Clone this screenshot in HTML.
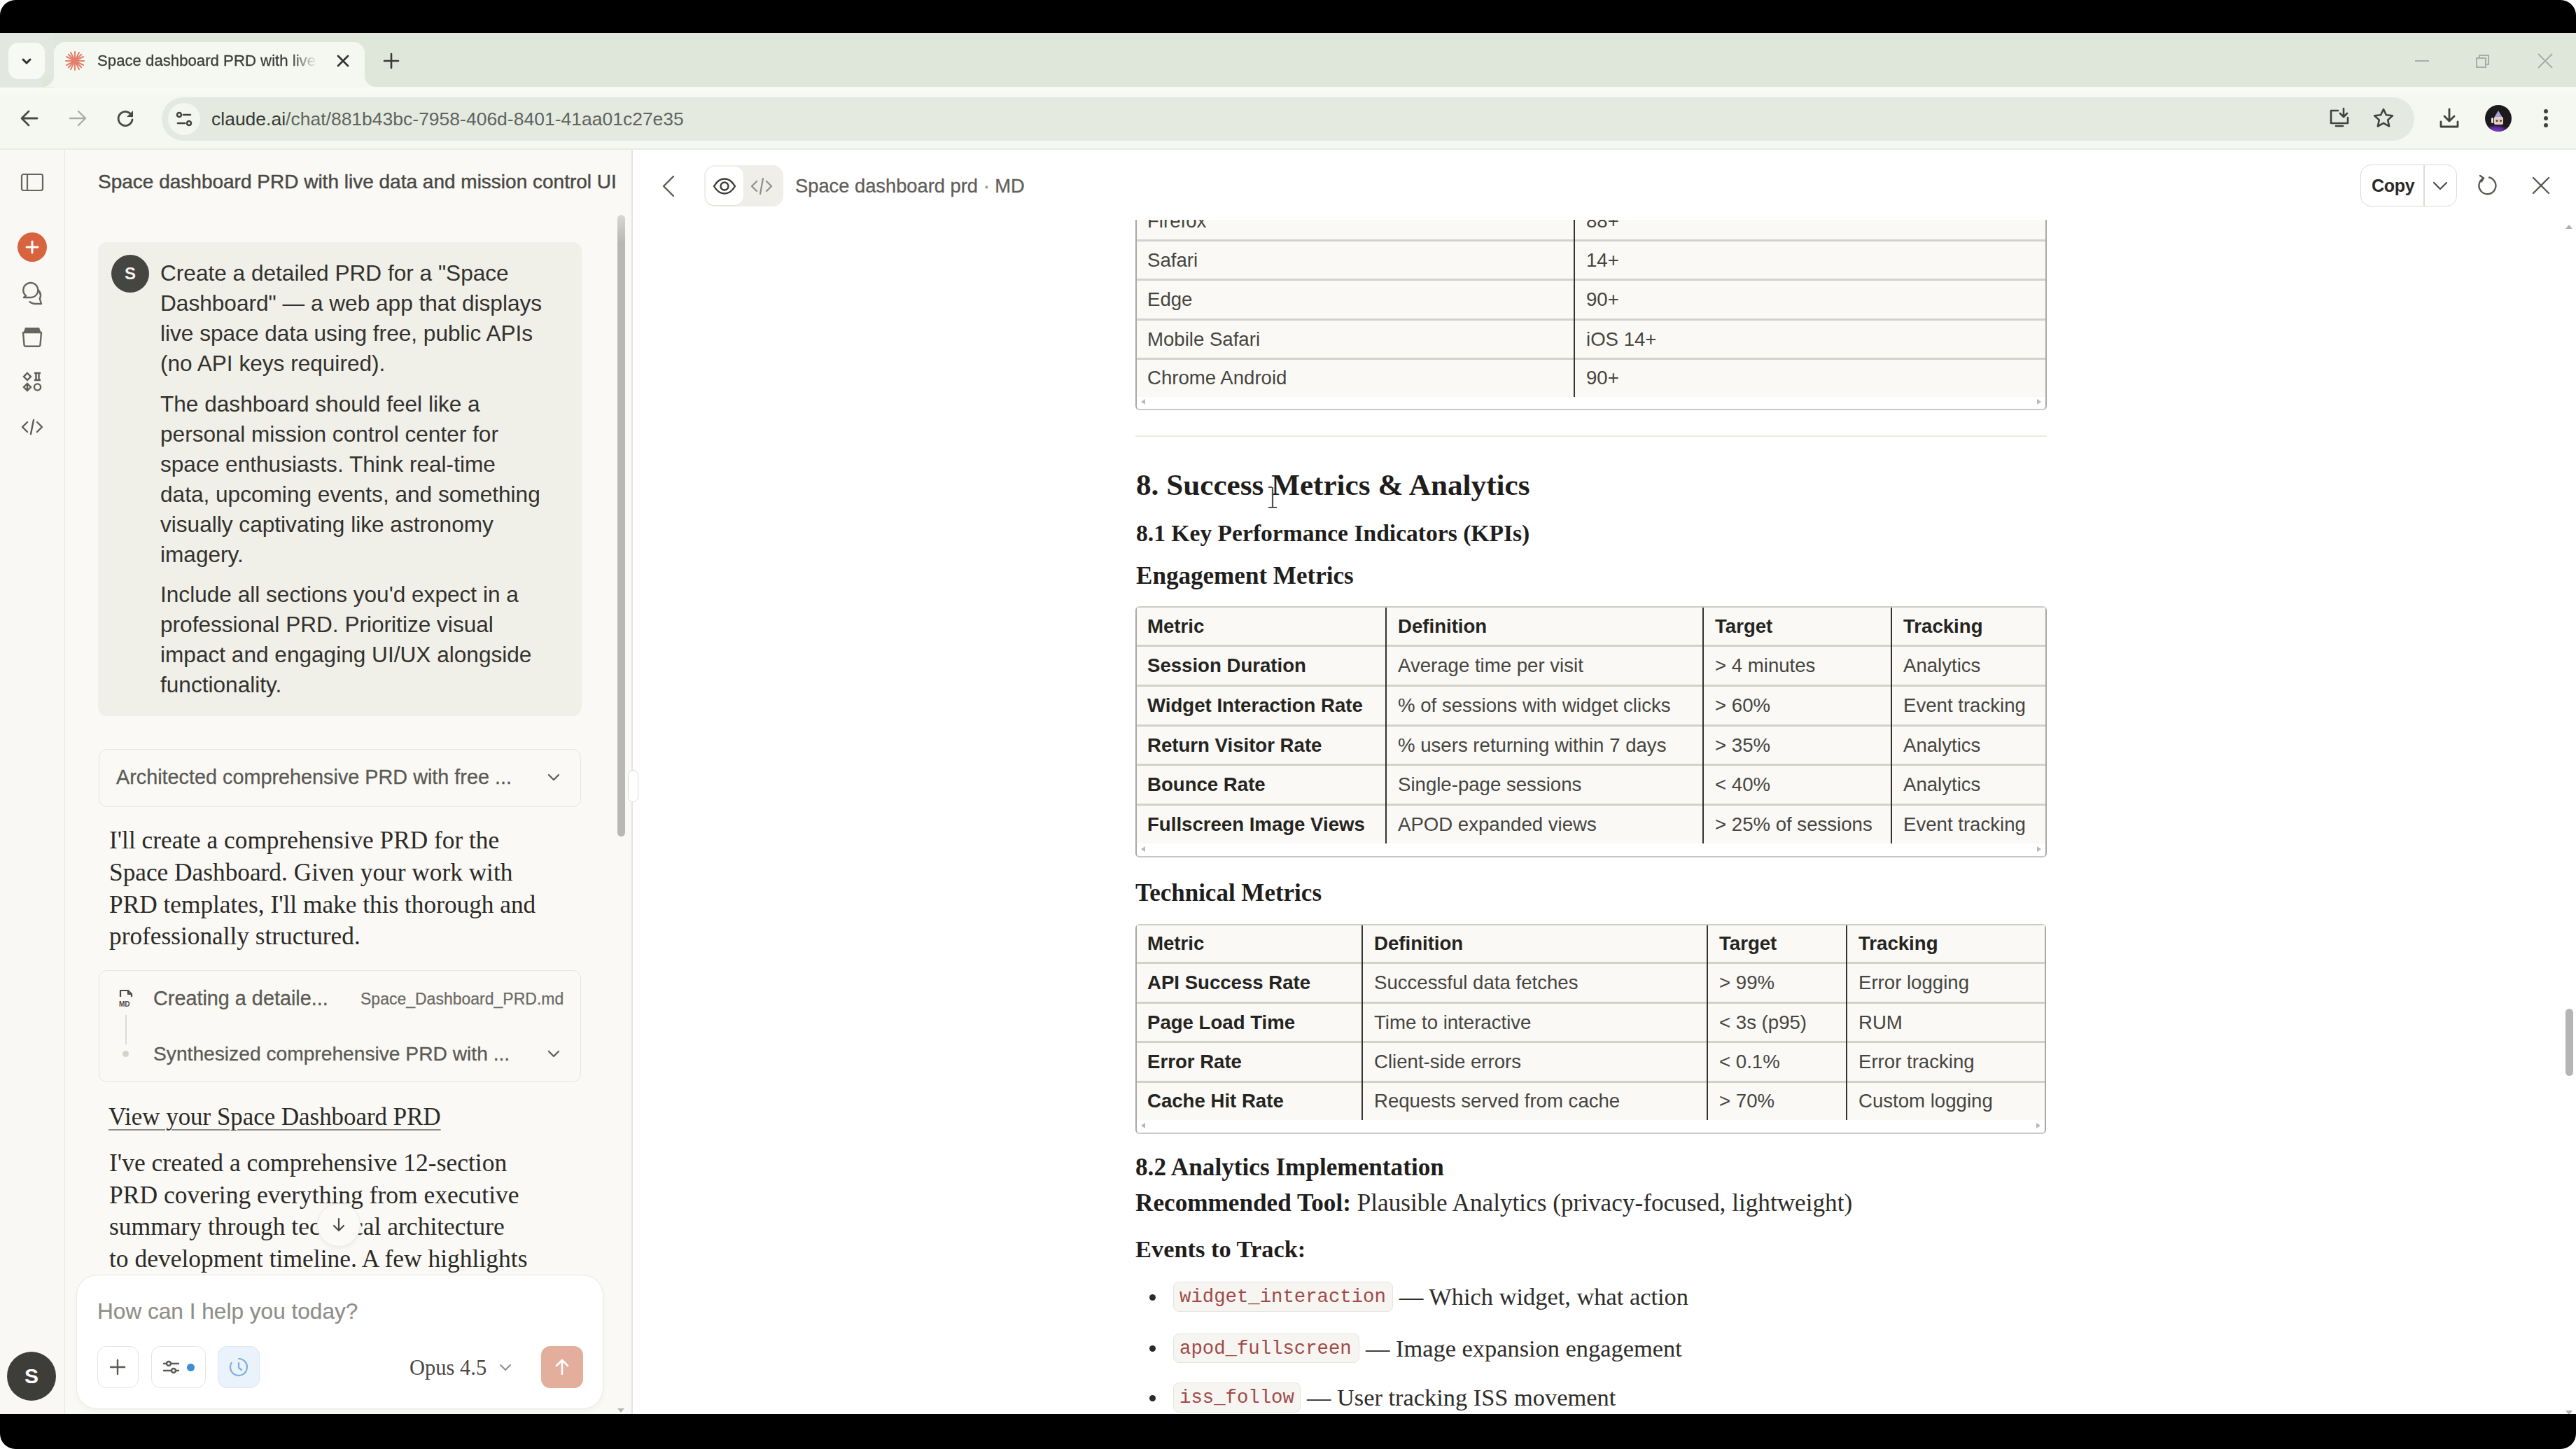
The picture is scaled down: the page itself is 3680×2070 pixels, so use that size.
<!DOCTYPE html>
<html><head><meta charset="utf-8">
<style>
*{box-sizing:border-box;margin:0;padding:0}
html,body{width:3680px;height:2070px;overflow:hidden;background:#fff}
body{position:relative;font-family:"Liberation Sans",sans-serif;color:#2b2a27}
.a{position:absolute}
.sans{font-family:"Liberation Sans",sans-serif}
.serif{font-family:"Liberation Serif",serif}
.mono{font-family:"Liberation Mono",monospace}
.nw{white-space:nowrap}
#frame{left:0;top:0;width:3680px;height:2070px;background:#000;border-radius:22px}
#tabstrip{left:0;top:47px;width:3680px;height:78px;background:#dfe6da}
#toolbar{left:0;top:124px;width:3680px;height:90px;background:#f5f8f1}
#page{left:0;top:214px;width:3680px;height:1806px;background:#fff}
</style></head><body>
<div id="frame" class="a"></div>
<div id="tabstrip" class="a"></div>
<div id="toolbar" class="a"></div>
<div class="a" style="left:0;top:124px;width:3680px;height:12px;background:#f6faf3"></div>
<div id="page" class="a"></div>
<!-- tab strip -->
<div class="a" style="left:0;top:47px;width:77px;height:78px;background:#e2e7df"></div>
<div class="a" style="left:12px;top:61px;width:52px;height:52px;border-radius:14px;background:#f7faf4"></div>
<svg class="a" style="left:26px;top:75px" width="24" height="24" viewBox="0 0 24 24"><path d="M7 10l5 5 5-5" fill="none" stroke="#2f2f2f" stroke-width="3" stroke-linecap="round" stroke-linejoin="round"/></svg>
<!-- active tab -->
<div class="a" style="left:77px;top:60px;width:444px;height:66px;background:#f5f8f1;border-radius:16px 16px 0 0"></div>
<div class="a" style="left:61px;top:108px;width:16px;height:16px;background:radial-gradient(circle at 0 0,#dfe6da 15.5px,#f5f8f1 16.5px)"></div>
<div class="a" style="left:521px;top:108px;width:16px;height:16px;background:radial-gradient(circle at 100% 0,#dfe6da 15.5px,#f5f8f1 16.5px)"></div>
<svg class="a" style="left:91px;top:71px" width="32" height="32" viewBox="0 0 32 32"><g stroke="#e0745f" stroke-width="2" stroke-linecap="round" opacity="0.9">
<path d="M16 3v26M3 16h26M6.8 6.8l18.4 18.4M25.2 6.8L6.8 25.2M10 4l12 24M22 4L10 28M4 10l24 12M4 22l24-12"/></g></svg>
<div class="a nw" style="left:139px;top:70px;width:314px;height:34px;overflow:hidden;font-size:22.2px;line-height:34px;color:#3b3d3a;-webkit-text-stroke:0.3px #3b3d3a;-webkit-mask-image:linear-gradient(90deg,#000 88%,transparent)">Space dashboard PRD with live data</div>
<svg class="a" style="left:478px;top:75px" width="24" height="24" viewBox="0 0 24 24"><path d="M5 5l14 14M19 5L5 19" stroke="#2f2f2f" stroke-width="2.6" stroke-linecap="round"/></svg>
<svg class="a" style="left:545px;top:73px" width="28" height="28" viewBox="0 0 28 28"><path d="M14 4v20M4 14h20" stroke="#3a3a3a" stroke-width="2.6" stroke-linecap="round"/></svg>
<!-- window controls -->
<svg class="a" style="left:3446px;top:73px" width="28" height="28" viewBox="0 0 28 28"><path d="M4 14h20" stroke="#a9ada6" stroke-width="2"/></svg>
<svg class="a" style="left:3533px;top:73px" width="28" height="28" viewBox="0 0 28 28"><path d="M5 10h13v13H5z M9 10V6h13v13h-4" fill="none" stroke="#a9ada6" stroke-width="2"/></svg>
<svg class="a" style="left:3622px;top:73px" width="28" height="28" viewBox="0 0 28 28"><path d="M4 4l20 20M24 4L4 24" stroke="#a9ada6" stroke-width="2"/></svg>
<!-- toolbar -->
<svg class="a" style="left:26px;top:153px" width="32" height="32" viewBox="0 0 32 32"><path d="M27 16H6M15 6L5 16l10 10" fill="none" stroke="#474a46" stroke-width="2.8" stroke-linecap="round" stroke-linejoin="round"/></svg>
<svg class="a" style="left:95px;top:153px" width="32" height="32" viewBox="0 0 32 32"><path d="M5 16h21M17 6l10 10-10 10" fill="none" stroke="#a9ada6" stroke-width="2.4" stroke-linecap="round" stroke-linejoin="round"/></svg>
<svg class="a" style="left:163px;top:153px" width="32" height="32" viewBox="0 0 32 32"><path d="M25.5 13A10 10 0 1 0 26 18" fill="none" stroke="#474a46" stroke-width="2.8" stroke-linecap="round"/><path d="M27 5v9h-9z" fill="#474a46"/></svg>
<div class="a" style="left:231px;top:139px;width:3218px;height:62px;border-radius:31px;background:#e4eae0"></div>
<div class="a" style="left:240px;top:147px;width:46px;height:46px;border-radius:23px;background:#f4f7f0"></div>
<svg class="a" style="left:247px;top:154px" width="32" height="32" viewBox="0 0 32 32"><g fill="none" stroke="#3f423e" stroke-width="2.6" stroke-linecap="round"><circle cx="9" cy="10" r="3"/><path d="M15 10h10M7 22h10"/><circle cx="23" cy="22" r="3"/></g></svg>
<div class="a nw" style="left:302px;top:153px;font-size:26.5px;line-height:34px;color:#5f635e"><span style="color:#343733">claude.ai</span>/chat/881b43bc-7958-406d-8401-41aa01c27e35</div>
<svg class="a" style="left:3324px;top:151px" width="36" height="36" viewBox="0 0 36 36"><g fill="none" stroke="#3f423e" stroke-width="2.6" stroke-linecap="round" stroke-linejoin="round"><path d="M16 7H6v18h24v-8"/><path d="M24 4v11M19 11l5 5 5-5"/><path d="M13 29h10"/></g></svg>
<svg class="a" style="left:3387px;top:151px" width="36" height="36" viewBox="0 0 36 36"><path d="M18 5l3.9 8.3 9 1-6.7 6.1 1.9 8.9L18 24.8l-8.1 4.5 1.9-8.9-6.7-6.1 9-1z" fill="none" stroke="#3f423e" stroke-width="2.6" stroke-linejoin="round"/></svg>
<svg class="a" style="left:3481px;top:151px" width="36" height="36" viewBox="0 0 36 36"><g fill="none" stroke="#3f423e" stroke-width="2.8" stroke-linecap="round" stroke-linejoin="round"><path d="M18 5v17M11 15l7 7 7-7M6 23v7h24v-7"/></g></svg>
<svg class="a" style="left:3550px;top:150px" width="38" height="38" viewBox="0 0 38 38"><defs><clipPath id="avc"><circle cx="19" cy="19" r="19"/></clipPath></defs><g clip-path="url(#avc)"><rect width="38" height="38" fill="#1c1a1c"/><defs><radialGradient id="avg" cx="0.4" cy="1" r="0.6"><stop offset="0" stop-color="#8a3be0"/><stop offset="0.6" stop-color="#5a2a90"/><stop offset="1" stop-color="#1c1a1c" stop-opacity="0"/></radialGradient></defs><rect x="0" y="20" width="38" height="18" fill="url(#avg)"/><path d="M19 8l6 10H13z" fill="#a7a3d8"/><rect x="13" y="17" width="13" height="11" rx="2" fill="#e6d0c6"/><circle cx="17" cy="22.5" r="1.6" fill="#5a4530"/><circle cx="22.5" cy="22.5" r="1.6" fill="#5a4530"/><rect x="9" y="18" width="3" height="8" rx="1.5" fill="#e8e4e6"/></g></svg>
<svg class="a" style="left:3625px;top:151px" width="24" height="36" viewBox="0 0 24 36"><g fill="#3f423e"><circle cx="12" cy="8" r="3"/><circle cx="12" cy="18" r="3"/><circle cx="12" cy="28" r="3"/></g></svg>
<div class="a" style="left:0;top:212px;width:3680px;height:2px;background:#e9ece6"></div>
<!-- LEFT RAIL -->
<div class="a" style="left:0;top:214px;width:93px;height:1806px;background:#f9f8f4;border-right:1.5px solid #e6e5df"></div>
<svg class="a" style="left:28px;top:245px" width="36" height="32" viewBox="0 0 36 32"><g fill="none" stroke="#66655f" stroke-width="2.2"><rect x="3" y="4" width="30" height="23" rx="2.5"/><path d="M11 4v23"/></g></svg>
<div class="a" style="left:25px;top:332px;width:42px;height:42px;border-radius:21px;background:#d8633f"></div>
<svg class="a" style="left:31px;top:338px" width="30" height="30" viewBox="0 0 30 30"><path d="M15 7v16M7 15h16" stroke="#fff" stroke-width="3" stroke-linecap="round"/></svg>
<svg class="a" style="left:28px;top:401px" width="36" height="36" viewBox="0 0 36 36"><g fill="none" stroke="#66655f" stroke-width="2.4" stroke-linejoin="round" stroke-linecap="round"><path d="M9 21.5A10.5 10.5 0 1 1 16 24H6z"/><path d="M26.5 13.5c2.3 2 3.5 4.7 3.5 7.5 0 1.6-.4 3.2-1.2 4.6L31 33h-9c-3 0-5.6-1-7.6-2.8"/></g></svg>
<svg class="a" style="left:28px;top:463px" width="36" height="36" viewBox="0 0 36 36"><path d="M8 5h20l2.5 7h-25z" fill="#66655f"/><path d="M5 12h26l-1.5 17.5a2.5 2.5 0 0 1-2.5 2.3H9a2.5 2.5 0 0 1-2.5-2.3z" fill="none" stroke="#66655f" stroke-width="2.4" stroke-linejoin="round"/></svg>
<svg class="a" style="left:28px;top:528px" width="36" height="36" viewBox="0 0 36 36"><g fill="none" stroke="#5d5c57" stroke-width="2.4"><path d="M11 5l5 5-5 5-5-5z"/><path d="M21 5h9M21 15h9M23.5 5v10M27.5 5v10"/><path d="M11 20l5 5-5 5-5-5zM11 20v10"/><circle cx="25.5" cy="25" r="4.6"/></g></svg>
<svg class="a" style="left:28px;top:592px" width="36" height="36" viewBox="0 0 36 36"><g fill="none" stroke="#5d5c57" stroke-width="2.4" stroke-linecap="round" stroke-linejoin="round"><path d="M11 11l-7 7 7 7M25 11l7 7-7 7M20 8l-4 20"/></g></svg>
<div class="a" style="left:10px;top:1931px;width:70px;height:70px;border-radius:35px;background:#3d3d3a;color:#fff;font-weight:700;font-size:30px;line-height:70px;text-align:center">S</div>

<!-- CHAT PANEL -->
<div class="a" style="left:93px;top:214px;width:811px;height:1806px;background:#faf9f5"></div>
<div class="a" style="left:902px;top:214px;width:2px;height:1806px;background:#e4e3de"></div>
<div class="a nw" style="left:140px;top:243px;font-size:28px;line-height:34px;color:#4a4945;-webkit-text-stroke:0.45px #4a4945">Space dashboard PRD with live data and mission control UI</div>

<div class="a" style="left:140px;top:346px;width:691px;height:677px;border-radius:13px;background:#f0efe8"></div>
<div class="a" style="left:159px;top:364px;width:54px;height:54px;border-radius:27px;background:#454542;color:#f4f4f2;font-weight:700;font-size:24px;line-height:54px;text-align:center">S</div>
<div class="a nw" style="left:229px;top:369px;font-size:31.6px;line-height:43px;color:#32312d">
Create a detailed PRD for a "Space<br>Dashboard" — a web app that displays<br>live space data using free, public APIs<br>(no API keys required).
<div style="height:15px"></div>
The dashboard should feel like a<br>personal mission control center for<br>space enthusiasts. Think real-time<br>data, upcoming events, and something<br>visually captivating like astronomy<br>imagery.
<div style="height:14px"></div>
Include all sections you'd expect in a<br>professional PRD. Prioritize visual<br>impact and engaging UI/UX alongside<br>functionality.
</div>

<div class="a" style="left:141px;top:1070px;width:689px;height:83px;border-radius:12px;border:1.5px solid #e6e4de;background:#faf9f5"></div>
<div class="a nw" style="left:166px;top:1093px;font-size:28.8px;line-height:34px;color:#5b5a55;-webkit-text-stroke:0.3px #5b5a55">Architected comprehensive PRD with free ...</div>
<svg class="a" style="left:777px;top:1096px" width="28" height="28" viewBox="0 0 28 28"><path d="M7 11l7 7 7-7" fill="none" stroke="#5b5a55" stroke-width="2.2" stroke-linecap="round" stroke-linejoin="round"/></svg>

<div class="a nw serif" style="left:156px;top:1178px;font-size:35.3px;line-height:45.8px;color:#2b2a27">I'll create a comprehensive PRD for the<br>Space Dashboard. Given your work with<br>PRD templates, I'll make this thorough and<br>professionally structured.</div>

<div class="a" style="left:141px;top:1386px;width:689px;height:160px;border-radius:12px;border:1.5px solid #e6e4de;background:#faf9f5"></div>
<svg class="a" style="left:166px;top:1411px" width="28" height="30" viewBox="0 0 28 30"><g fill="none" stroke="#4a4a46" stroke-width="2.2" stroke-linejoin="round"><path d="M6 13V4h11l5 5v4"/><path d="M17 4v5h5"/></g><text x="4" y="27" font-family="Liberation Sans" font-weight="700" font-size="10" fill="#4a4a46">MD</text></svg>
<div class="a nw" style="left:219px;top:1409px;font-size:28.8px;line-height:34px;color:#5b5a55;-webkit-text-stroke:0.3px #5b5a55">Creating a detaile...</div>
<div class="a nw" style="left:515px;top:1410px;font-size:23px;line-height:34px;color:#6b6a65;-webkit-text-stroke:0.25px #6b6a65">Space_Dashboard_PRD.md</div>
<div class="a" style="left:179px;top:1450px;width:1.5px;height:42px;background:#dcdad4"></div>
<div class="a" style="left:175px;top:1501px;width:9px;height:9px;border-radius:5px;background:#d5d3cd"></div>
<div class="a nw" style="left:219px;top:1488px;font-size:28.2px;line-height:34px;color:#5b5a55;-webkit-text-stroke:0.3px #5b5a55">Synthesized comprehensive PRD with ...</div>
<svg class="a" style="left:777px;top:1491px" width="28" height="28" viewBox="0 0 28 28"><path d="M7 11l7 7 7-7" fill="none" stroke="#5b5a55" stroke-width="2.2" stroke-linecap="round" stroke-linejoin="round"/></svg>

<div class="a nw serif" style="left:155px;top:1573px;font-size:34.9px;line-height:46px;color:#2b2a27;text-decoration:underline;text-decoration-thickness:2px;text-underline-offset:6px;text-decoration-color:#8a8984">View your Space Dashboard PRD</div>
<div class="a nw serif" style="left:156px;top:1639px;font-size:35.5px;line-height:45.7px;color:#2b2a27">I've created a comprehensive 12-section<br>PRD covering everything from executive<br>summary through technical architecture<br>to development timeline. A few highlights</div>
<div class="a" style="left:453px;top:1719px;width:62px;height:62px;border-radius:31px;background:#fbfaf7;border:1px solid #ebeae5;box-shadow:0 2px 6px rgba(0,0,0,.06)"></div>
<svg class="a" style="left:470px;top:1736px" width="28" height="28" viewBox="0 0 28 28"><path d="M14 5v17M7 15l7 7 7-7" fill="none" stroke="#4a4a46" stroke-width="2.2" stroke-linecap="round" stroke-linejoin="round"/></svg>

<!-- scrollbar -->
<div class="a" style="left:882px;top:307px;width:11px;height:888px;border-radius:6px;background:linear-gradient(#d8d7d3,#b8b7b3 40px,#b8b7b3)"></div>
<div class="a" style="left:897px;top:1100px;width:15px;height:46px;border-radius:8px;background:#fff;border:1.5px solid #dddcd7"></div>

<svg class="a" style="left:881px;top:2011px" width="12" height="9" viewBox="0 0 12 9"><path d="M1 1l5 6 5-6z" fill="#b5b4b0"/></svg>
<!-- input box -->
<div class="a" style="left:109px;top:1821px;width:753px;height:192px;border-radius:30px;background:#fff;border:1.5px solid #ebe9e3;box-shadow:0 3px 10px rgba(0,0,0,.035)"></div>
<div class="a nw" style="left:139px;top:1853px;font-size:31.6px;line-height:40px;color:#8f8e89;-webkit-text-stroke:0.2px #8f8e89">How can I help you today?</div>
<div class="a" style="left:139px;top:1923px;width:59px;height:60px;border-radius:13px;border:1.5px solid #e6e4de;background:#fff"></div>
<svg class="a" style="left:154px;top:1939px" width="28" height="28" viewBox="0 0 28 28"><path d="M14 4v20M4 14h20" stroke="#5b5a55" stroke-width="2.4" stroke-linecap="round"/></svg>
<div class="a" style="left:216px;top:1923px;width:78px;height:60px;border-radius:13px;border:1.5px solid #e6e4de;background:#fff"></div>
<svg class="a" style="left:231px;top:1939px" width="30" height="28" viewBox="0 0 30 28"><g fill="none" stroke="#5b5a55" stroke-width="2.4" stroke-linecap="round"><path d="M3 9h21M3 19h21"/><circle cx="10" cy="9" r="3" fill="#fff"/><circle cx="17" cy="19" r="3" fill="#fff"/></g></svg>
<div class="a" style="left:267px;top:1948px;width:11px;height:11px;border-radius:6px;background:#3b8fd9"></div>
<div class="a" style="left:311px;top:1923px;width:60px;height:60px;border-radius:13px;border:1.5px solid #dbe7f3;background:#eaf2fb"></div>
<svg class="a" style="left:323px;top:1935px" width="36" height="36" viewBox="0 0 36 36"><g fill="none" stroke="#7eaedd" stroke-width="2.2" stroke-linecap="round"><path d="M18 6a12 12 0 1 1-10.4 6"/><path d="M18 12v7l4 3"/></g></svg>
<div class="a nw serif" style="left:585px;top:1934px;font-size:30.5px;line-height:40px;color:#4a4945">Opus 4.5</div>
<svg class="a" style="left:710px;top:1941px" width="24" height="24" viewBox="0 0 24 24"><path d="M5 9l7 7 7-7" fill="none" stroke="#8f8e89" stroke-width="2" stroke-linecap="round" stroke-linejoin="round"/></svg>
<div class="a" style="left:773px;top:1923px;width:60px;height:60px;border-radius:13px;background:#e3ae9c"></div>
<svg class="a" style="left:789px;top:1939px" width="28" height="28" viewBox="0 0 28 28"><path d="M14 24V5M6 12l8-8 8 8" fill="none" stroke="#fff" stroke-width="2.6" stroke-linecap="round" stroke-linejoin="round"/></svg>


<!-- RIGHT PANEL START -->
<!-- RIGHT HEADER -->
<div class="a" style="left:904px;top:214px;width:2776px;height:100px;background:#fff"></div>
<svg class="a" style="left:939px;top:248px" width="32" height="36" viewBox="0 0 32 36"><path d="M23 4L9 18l14 14" fill="none" stroke="#5b5a55" stroke-width="2.4" stroke-linecap="round" stroke-linejoin="round"/></svg>
<div class="a" style="left:1006px;top:236px;width:113px;height:59px;border-radius:15px;background:#efeee9"></div>
<div class="a" style="left:1008px;top:238px;width:54px;height:55px;border-radius:13px;background:#fff;box-shadow:0 1px 2px rgba(0,0,0,.06)"></div>
<svg class="a" style="left:1017px;top:251px" width="36" height="30" viewBox="0 0 36 30"><g fill="none" stroke="#3d3d3a" stroke-width="2.4"><path d="M3 15c4-7 9-10.5 15-10.5S29 8 33 15c-4 7-9 10.5-15 10.5S7 22 3 15z"/><circle cx="18" cy="15" r="5.5"/></g></svg>
<svg class="a" style="left:1071px;top:250px" width="34" height="32" viewBox="0 0 34 32"><g fill="none" stroke="#8f8e89" stroke-width="2.2" stroke-linecap="round" stroke-linejoin="round"><path d="M10 9l-7 7 7 7M24 9l7 7-7 7M19 5l-4 22"/></g></svg>
<div class="a nw" style="left:1136px;top:249px;font-size:27.3px;line-height:34px;color:#5f5e59;-webkit-text-stroke:0.3px #5f5e59">Space dashboard prd <span style="color:#a9a8a3">·</span> MD</div>

<div class="a" style="left:3372px;top:235px;width:138px;height:60px;border-radius:15px;border:1.5px solid #dcdad5;background:#fff"></div>
<div class="a" style="left:3462px;top:236px;width:1.5px;height:58px;background:#dcdad5"></div>
<div class="a nw" style="left:3388px;top:248px;font-size:25px;line-height:34px;color:#2b2a27;font-weight:700;letter-spacing:-0.3px">Copy</div>
<svg class="a" style="left:3473px;top:253px" width="26" height="24" viewBox="0 0 26 24"><path d="M4 8l9 9 9-9" fill="none" stroke="#4a4a46" stroke-width="2.2" stroke-linecap="round" stroke-linejoin="round"/></svg>
<svg class="a" style="left:3535px;top:247px" width="36" height="36" viewBox="0 0 36 36"><g fill="none" stroke="#5b5a55" stroke-width="2.4" stroke-linecap="round" stroke-linejoin="round"><path d="M13 7.5A12 12 0 1 0 21 6.5"/><path d="M8 4l5 3.5-3 5"/></g></svg>
<svg class="a" style="left:3614px;top:249px" width="32" height="32" viewBox="0 0 32 32"><path d="M5 5l22 22M27 5L5 27" stroke="#5b5a55" stroke-width="2.4" stroke-linecap="round"/></svg>
<div class="a" style="left:904px;top:314px;width:2776px;height:1706px;overflow:hidden">
<div class="a" style="left:718px;top:-140px;width:1302px;height:412px;border:2px solid #a9a8a5;border-top-color:#cdcbc8;border-bottom-color:#c9c8c5;border-radius:6px;background:#fff"></div>
<div class="a" style="left:720px;top:-138px;width:1298px;height:391px;background:#faf9f6"></div>
<div class="a" style="left:720px;top:-28px;width:1298px;height:3px;background:#d3d1cc"></div>
<div class="a" style="left:720px;top:28px;width:1298px;height:3px;background:#d3d1cc"></div>
<div class="a" style="left:720px;top:84px;width:1298px;height:3px;background:#d3d1cc"></div>
<div class="a" style="left:720px;top:141px;width:1298px;height:3px;background:#d3d1cc"></div>
<div class="a" style="left:720px;top:197px;width:1298px;height:3px;background:#d3d1cc"></div>
<div class="a" style="left:1344px;top:-138px;width:2px;height:391px;background:#34332f"></div>
<div class="a nw sans" style="left:735px;top:-71.1px;font-size:27.6px;line-height:34px;color:#46453f">Chrome</div>
<div class="a nw sans" style="left:1362px;top:-71.1px;font-size:27.6px;line-height:34px;color:#46453f">90+</div>
<div class="a nw sans" style="left:735px;top:-15.1px;font-size:27.6px;line-height:34px;color:#46453f">Firefox</div>
<div class="a nw sans" style="left:1362px;top:-15.1px;font-size:27.6px;line-height:34px;color:#46453f">88+</div>
<div class="a nw sans" style="left:735px;top:40.9px;font-size:27.6px;line-height:34px;color:#46453f">Safari</div>
<div class="a nw sans" style="left:1362px;top:40.9px;font-size:27.6px;line-height:34px;color:#46453f">14+</div>
<div class="a nw sans" style="left:735px;top:97.4px;font-size:27.6px;line-height:34px;color:#46453f">Edge</div>
<div class="a nw sans" style="left:1362px;top:97.4px;font-size:27.6px;line-height:34px;color:#46453f">90+</div>
<div class="a nw sans" style="left:735px;top:153.9px;font-size:27.6px;line-height:34px;color:#46453f">Mobile Safari</div>
<div class="a nw sans" style="left:1362px;top:153.9px;font-size:27.6px;line-height:34px;color:#46453f">iOS 14+</div>
<div class="a nw sans" style="left:735px;top:209.4px;font-size:27.6px;line-height:34px;color:#46453f">Chrome Android</div>
<div class="a nw sans" style="left:1362px;top:209.4px;font-size:27.6px;line-height:34px;color:#46453f">90+</div>
<svg class="a" style="left:724px;top:255px" width="10" height="10" viewBox="0 0 10 10"><path d="M8 1L2 5l6 4z" fill="#b9b9b9"/></svg>
<svg class="a" style="left:2004px;top:255px" width="10" height="10" viewBox="0 0 10 10"><path d="M2 1l6 4-6 4z" fill="#b9b9b9"/></svg>
<div class="a" style="left:718px;top:308px;width:1302px;height:2px;background:#ebe9e4"></div>
<div class="a nw serif" style="left:719px;top:353.9px;font-size:43.2px;line-height:50px;font-weight:700;color:#1f1e1c">8. Success Metrics &amp; Analytics</div>
<div class="a nw serif" style="left:719px;top:427.7px;font-size:33.6px;line-height:40px;font-weight:700;color:#1f1e1c">8.1 Key Performance Indicators (KPIs)</div>
<div class="a nw serif" style="left:719px;top:489.2px;font-size:35.1px;line-height:40px;font-weight:700;color:#1f1e1c">Engagement Metrics</div>
<div class="a" style="left:718px;top:552px;width:1302px;height:359px;border:2px solid #a9a8a5;border-top-color:#cdcbc8;border-bottom-color:#c9c8c5;border-radius:6px;background:#fff"></div>
<div class="a" style="left:720px;top:554px;width:1298px;height:337px;background:#faf9f6"></div>
<div class="a" style="left:720px;top:607px;width:1298px;height:3px;background:#d3d1cc"></div>
<div class="a" style="left:720px;top:664px;width:1298px;height:3px;background:#d3d1cc"></div>
<div class="a" style="left:720px;top:721px;width:1298px;height:3px;background:#d3d1cc"></div>
<div class="a" style="left:720px;top:777px;width:1298px;height:3px;background:#d3d1cc"></div>
<div class="a" style="left:720px;top:834px;width:1298px;height:3px;background:#d3d1cc"></div>
<div class="a" style="left:1075px;top:554px;width:2px;height:337px;background:#34332f"></div>
<div class="a" style="left:1528px;top:554px;width:2px;height:337px;background:#34332f"></div>
<div class="a" style="left:1797px;top:554px;width:2px;height:337px;background:#34332f"></div>
<div class="a nw sans" style="left:735px;top:563.9px;font-size:27.6px;line-height:34px;color:#25241f;font-weight:700">Metric</div>
<div class="a nw sans" style="left:1093px;top:563.9px;font-size:27.6px;line-height:34px;color:#25241f;font-weight:700">Definition</div>
<div class="a nw sans" style="left:1546px;top:563.9px;font-size:27.6px;line-height:34px;color:#25241f;font-weight:700">Target</div>
<div class="a nw sans" style="left:1815px;top:563.9px;font-size:27.6px;line-height:34px;color:#25241f;font-weight:700">Tracking</div>
<div class="a nw sans" style="left:735px;top:620.4px;font-size:27.6px;line-height:34px;color:#25241f;font-weight:700">Session Duration</div>
<div class="a nw sans" style="left:1093px;top:620.4px;font-size:27.6px;line-height:34px;color:#46453f">Average time per visit</div>
<div class="a nw sans" style="left:1546px;top:620.4px;font-size:27.6px;line-height:34px;color:#46453f">&gt; 4 minutes</div>
<div class="a nw sans" style="left:1815px;top:620.4px;font-size:27.6px;line-height:34px;color:#46453f">Analytics</div>
<div class="a nw sans" style="left:735px;top:677.4px;font-size:27.6px;line-height:34px;color:#25241f;font-weight:700">Widget Interaction Rate</div>
<div class="a nw sans" style="left:1093px;top:677.4px;font-size:27.6px;line-height:34px;color:#46453f">% of sessions with widget clicks</div>
<div class="a nw sans" style="left:1546px;top:677.4px;font-size:27.6px;line-height:34px;color:#46453f">&gt; 60%</div>
<div class="a nw sans" style="left:1815px;top:677.4px;font-size:27.6px;line-height:34px;color:#46453f">Event tracking</div>
<div class="a nw sans" style="left:735px;top:733.9px;font-size:27.6px;line-height:34px;color:#25241f;font-weight:700">Return Visitor Rate</div>
<div class="a nw sans" style="left:1093px;top:733.9px;font-size:27.6px;line-height:34px;color:#46453f">% users returning within 7 days</div>
<div class="a nw sans" style="left:1546px;top:733.9px;font-size:27.6px;line-height:34px;color:#46453f">&gt; 35%</div>
<div class="a nw sans" style="left:1815px;top:733.9px;font-size:27.6px;line-height:34px;color:#46453f">Analytics</div>
<div class="a nw sans" style="left:735px;top:790.4px;font-size:27.6px;line-height:34px;color:#25241f;font-weight:700">Bounce Rate</div>
<div class="a nw sans" style="left:1093px;top:790.4px;font-size:27.6px;line-height:34px;color:#46453f">Single-page sessions</div>
<div class="a nw sans" style="left:1546px;top:790.4px;font-size:27.6px;line-height:34px;color:#46453f">&lt; 40%</div>
<div class="a nw sans" style="left:1815px;top:790.4px;font-size:27.6px;line-height:34px;color:#46453f">Analytics</div>
<div class="a nw sans" style="left:735px;top:846.9px;font-size:27.6px;line-height:34px;color:#25241f;font-weight:700">Fullscreen Image Views</div>
<div class="a nw sans" style="left:1093px;top:846.9px;font-size:27.6px;line-height:34px;color:#46453f">APOD expanded views</div>
<div class="a nw sans" style="left:1546px;top:846.9px;font-size:27.6px;line-height:34px;color:#46453f">&gt; 25% of sessions</div>
<div class="a nw sans" style="left:1815px;top:846.9px;font-size:27.6px;line-height:34px;color:#46453f">Event tracking</div>
<svg class="a" style="left:724px;top:894px" width="10" height="10" viewBox="0 0 10 10"><path d="M8 1L2 5l6 4z" fill="#b9b9b9"/></svg>
<svg class="a" style="left:2004px;top:894px" width="10" height="10" viewBox="0 0 10 10"><path d="M2 1l6 4-6 4z" fill="#b9b9b9"/></svg>
<div class="a nw serif" style="left:718px;top:942.2px;font-size:35.0px;line-height:40px;font-weight:700;color:#1f1e1c">Technical Metrics</div>
<div class="a" style="left:718px;top:1006px;width:1301px;height:300px;border:2px solid #a9a8a5;border-top-color:#cdcbc8;border-bottom-color:#c9c8c5;border-radius:6px;background:#fff"></div>
<div class="a" style="left:720px;top:1008px;width:1297px;height:278px;background:#faf9f6"></div>
<div class="a" style="left:720px;top:1060px;width:1297px;height:3px;background:#d3d1cc"></div>
<div class="a" style="left:720px;top:1117px;width:1297px;height:3px;background:#d3d1cc"></div>
<div class="a" style="left:720px;top:1173px;width:1297px;height:3px;background:#d3d1cc"></div>
<div class="a" style="left:720px;top:1230px;width:1297px;height:3px;background:#d3d1cc"></div>
<div class="a" style="left:1041px;top:1008px;width:2px;height:278px;background:#34332f"></div>
<div class="a" style="left:1534px;top:1008px;width:2px;height:278px;background:#34332f"></div>
<div class="a" style="left:1733px;top:1008px;width:2px;height:278px;background:#34332f"></div>
<div class="a nw sans" style="left:735px;top:1017.4px;font-size:27.6px;line-height:34px;color:#25241f;font-weight:700">Metric</div>
<div class="a nw sans" style="left:1059px;top:1017.4px;font-size:27.6px;line-height:34px;color:#25241f;font-weight:700">Definition</div>
<div class="a nw sans" style="left:1552px;top:1017.4px;font-size:27.6px;line-height:34px;color:#25241f;font-weight:700">Target</div>
<div class="a nw sans" style="left:1751px;top:1017.4px;font-size:27.6px;line-height:34px;color:#25241f;font-weight:700">Tracking</div>
<div class="a nw sans" style="left:735px;top:1073.4px;font-size:27.6px;line-height:34px;color:#25241f;font-weight:700">API Success Rate</div>
<div class="a nw sans" style="left:1059px;top:1073.4px;font-size:27.6px;line-height:34px;color:#46453f">Successful data fetches</div>
<div class="a nw sans" style="left:1552px;top:1073.4px;font-size:27.6px;line-height:34px;color:#46453f">&gt; 99%</div>
<div class="a nw sans" style="left:1751px;top:1073.4px;font-size:27.6px;line-height:34px;color:#46453f">Error logging</div>
<div class="a nw sans" style="left:735px;top:1129.9px;font-size:27.6px;line-height:34px;color:#25241f;font-weight:700">Page Load Time</div>
<div class="a nw sans" style="left:1059px;top:1129.9px;font-size:27.6px;line-height:34px;color:#46453f">Time to interactive</div>
<div class="a nw sans" style="left:1552px;top:1129.9px;font-size:27.6px;line-height:34px;color:#46453f">&lt; 3s (p95)</div>
<div class="a nw sans" style="left:1751px;top:1129.9px;font-size:27.6px;line-height:34px;color:#46453f">RUM</div>
<div class="a nw sans" style="left:735px;top:1186.4px;font-size:27.6px;line-height:34px;color:#25241f;font-weight:700">Error Rate</div>
<div class="a nw sans" style="left:1059px;top:1186.4px;font-size:27.6px;line-height:34px;color:#46453f">Client-side errors</div>
<div class="a nw sans" style="left:1552px;top:1186.4px;font-size:27.6px;line-height:34px;color:#46453f">&lt; 0.1%</div>
<div class="a nw sans" style="left:1751px;top:1186.4px;font-size:27.6px;line-height:34px;color:#46453f">Error tracking</div>
<div class="a nw sans" style="left:735px;top:1242.4px;font-size:27.6px;line-height:34px;color:#25241f;font-weight:700">Cache Hit Rate</div>
<div class="a nw sans" style="left:1059px;top:1242.4px;font-size:27.6px;line-height:34px;color:#46453f">Requests served from cache</div>
<div class="a nw sans" style="left:1552px;top:1242.4px;font-size:27.6px;line-height:34px;color:#46453f">&gt; 70%</div>
<div class="a nw sans" style="left:1751px;top:1242.4px;font-size:27.6px;line-height:34px;color:#46453f">Custom logging</div>
<svg class="a" style="left:724px;top:1289px" width="10" height="10" viewBox="0 0 10 10"><path d="M8 1L2 5l6 4z" fill="#b9b9b9"/></svg>
<svg class="a" style="left:2003px;top:1289px" width="10" height="10" viewBox="0 0 10 10"><path d="M2 1l6 4-6 4z" fill="#b9b9b9"/></svg>
<div class="a nw serif" style="left:718px;top:1334.1px;font-size:35.2px;line-height:40px;font-weight:700;color:#1f1e1c">8.2 Analytics Implementation</div>
<div class="a nw serif" style="left:718px;top:1383.1px;font-size:35.2px;line-height:44px;color:#2e2d2a"><b style="color:#1f1e1c">Recommended Tool:</b> Plausible Analytics (privacy-focused, lightweight)</div>
<div class="a nw serif" style="left:718px;top:1448.4px;font-size:34.4px;line-height:44px;font-weight:700;color:#1f1e1c">Events to Track:</div>
<div class="a" style="left:738px;top:1534.5px;width:9px;height:9px;border-radius:5px;background:#2b2a27"></div>
<div class="a" style="left:772px;top:1517px;width:314px;height:43px;border:1.5px solid #e6e4df;border-radius:8px;background:#f6f5f2"></div>
<div class="a nw mono" style="left:781px;top:1522.3px;font-size:27.3px;line-height:34px;color:#a04a47">widget_interaction</div>
<div class="a nw serif" style="left:1095px;top:1516.4px;font-size:34.4px;line-height:44px;color:#2e2d2a">— Which widget, what action</div>
<div class="a" style="left:738px;top:1608.0px;width:9px;height:9px;border-radius:5px;background:#2b2a27"></div>
<div class="a" style="left:772px;top:1591px;width:266px;height:42px;border:1.5px solid #e6e4df;border-radius:8px;background:#f6f5f2"></div>
<div class="a nw mono" style="left:781px;top:1595.8px;font-size:27.3px;line-height:34px;color:#a04a47">apod_fullscreen</div>
<div class="a nw serif" style="left:1047px;top:1589.9px;font-size:34.4px;line-height:44px;color:#2e2d2a">— Image expansion engagement</div>
<div class="a" style="left:738px;top:1678.5px;width:9px;height:9px;border-radius:5px;background:#2b2a27"></div>
<div class="a" style="left:772px;top:1661px;width:182px;height:43px;border:1.5px solid #e6e4df;border-radius:8px;background:#f6f5f2"></div>
<div class="a nw mono" style="left:781px;top:1666.3px;font-size:27.3px;line-height:34px;color:#a04a47">iss_follow</div>
<div class="a nw serif" style="left:963px;top:1660.4px;font-size:34.4px;line-height:44px;color:#2e2d2a">— User tracking ISS movement</div>
<div class="a" style="left:2761px;top:1127px;width:11px;height:96px;border-radius:6px;background:#b5b5b5"></div>
<svg class="a" style="left:2760px;top:5px" width="12" height="10" viewBox="0 0 12 10"><path d="M1 8l5-6 5 6z" fill="#b0b0b0"/></svg>
<svg class="a" style="left:2760px;top:1699px" width="12" height="10" viewBox="0 0 12 10"><path d="M1 2l5 6 5-6z" fill="#b0b0b0"/></svg>
</div>
<svg class="a" style="left:1808px;top:692px" width="20" height="36" viewBox="0 0 20 36"><g fill="none" stroke="#4f4f4f" stroke-width="2.2"><path d="M4 4h5M10 4v29M4 33h6M10 33h6"/></g></svg>
<!-- RIGHT PANEL END -->
</body></html>
